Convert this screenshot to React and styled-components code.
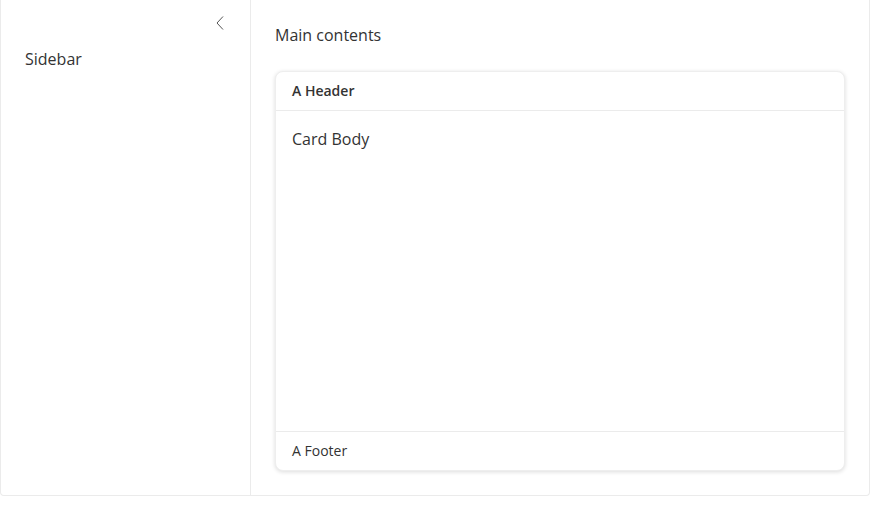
import React from 'react';
import styled, { createGlobalStyle } from 'styled-components';

const Global = createGlobalStyle`
  html, body {
    margin: 0;
    padding: 0;
    background: #fff;
    font-family: "Open Sans", "Noto Sans", sans-serif;
    color: #333;
  }
`;

const Layout = styled.div`
  box-sizing: border-box;
  width: 870px;
  height: 496px;
  display: flex;
  border: 1px solid #ebebeb;
  border-top: none;
  border-radius: 0 0 4px 4px;
`;

const Sidebar = styled.aside`
  box-sizing: border-box;
  width: 250px;
  flex-shrink: 0;
  border-right: 1px solid #ebebeb;
  padding: 13px 24px 0 24px;
  display: flex;
  flex-direction: column;
`;

const Collapse = styled.button`
  align-self: flex-end;
  margin-right: -4px;
  width: 20px;
  height: 20px;
  padding: 0;
  border: none;
  background: none;
  display: flex;
  align-items: center;
  justify-content: center;
  cursor: pointer;
`;

const SideLabel = styled.div`
  font-size: 16px;
  line-height: 22px;
  margin-top: 15px;
`;

const Main = styled.main`
  box-sizing: border-box;
  flex: 1;
  padding: 24px;
  display: flex;
  flex-direction: column;
`;

const Title = styled.div`
  font-size: 16px;
  line-height: 22px;
  margin-bottom: 25px;
`;

const Card = styled.section`
  flex: 1;
  display: flex;
  flex-direction: column;
  border-radius: 8px;
  border: 1px solid #eeeeee;
  box-shadow: 0 1px 4px rgba(0, 0, 0, 0.14);
  background: #fff;
`;

const CardHeader = styled.header`
  height: 39px;
  display: flex;
  align-items: center;
  padding: 0 16px 1px;
  box-sizing: border-box;
  border-bottom: 1px solid #ebebeb;
  font-size: 14px;
  font-weight: 600;
`;

const CardBody = styled.div`
  flex: 1;
  padding: 17px 16px;
  font-size: 16px;
  line-height: 22px;
`;

const CardFooter = styled.footer`
  height: 39px;
  box-sizing: border-box;
  display: flex;
  align-items: center;
  padding: 0 16px 1px;
  border-top: 1px solid #ebebeb;
  font-size: 14px;
`;

export default function App() {
  return (
    <>
      <Global />
      <Layout>
        <Sidebar>
          <Collapse aria-label="Collapse sidebar">
            <svg width="10" height="16" viewBox="0 0 10 16">
              <polyline points="8,1.5 2,8 8,14.5" fill="none" stroke="#555" strokeWidth="1" />
            </svg>
          </Collapse>
          <SideLabel>Sidebar</SideLabel>
        </Sidebar>
        <Main>
          <Title>Main contents</Title>
          <Card>
            <CardHeader>A Header</CardHeader>
            <CardBody>Card Body</CardBody>
            <CardFooter>A Footer</CardFooter>
          </Card>
        </Main>
      </Layout>
    </>
  );
}
